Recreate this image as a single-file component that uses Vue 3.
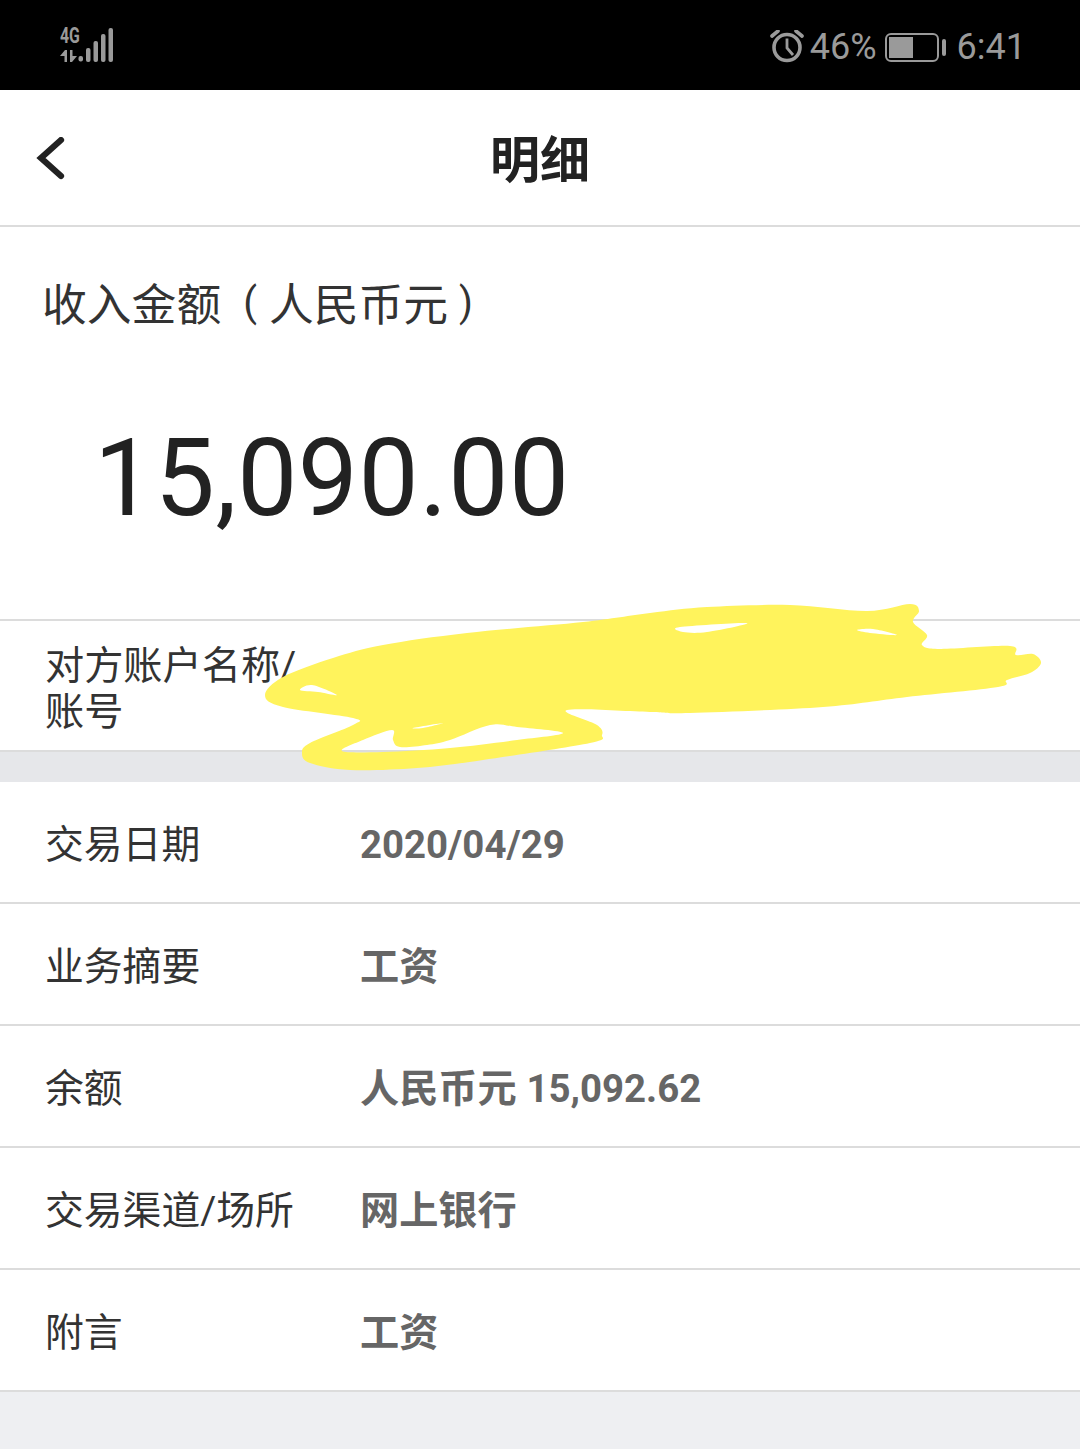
<script setup>
const rows = [
  { label: '交易日期', num: '2020/04/29' },
  { label: '业务摘要', value: '工资' },
  { label: '余额', value: '人民币元 ', num: '15,092.62' },
  { label: '交易渠道/场所', value: '网上银行' },
  { label: '附言', value: '工资' },
]

const outline = [
  [265,695],[283,677],[333,658],[383,645],[467,633],[583,622],[650,613],[707,607],[790,605],[867,611],[910,604],[919,611],[913,622],[927,635],[922,645],[940,649],[1010,646],[1016,655],[1033,654],[1041,663],[1030,673],[1007,680],[998,687],[907,697],[823,707],[690,713],[650,712],[567,710],[597,725],[602,735],[590,743],[483,760],[417,768],[350,770],[310,763],[302,753],[310,743],[353,725],[353,718],[283,707],
]
const holes = [
  [[300,690],[312,685],[337,695],[318,692]],
  [[342,751],[363,740],[392,730],[393,740],[400,747],[427,745],[450,740],[490,725],[517,727],[563,733],[517,740],[450,748],[383,752]],
  [[413,728],[443,723],[423,728]],
  [[680,627],[747,623],[707,632],[683,632]],
  [[857,630],[873,629],[897,635],[870,633]],
]
function smooth(p) {
  const n = p.length
  let d = `M${p[0][0]} ${p[0][1]}`
  for (let i = 0; i < n; i++) {
    const a = p[(i - 1 + n) % n], b = p[i], c = p[(i + 1) % n], e = p[(i + 2) % n]
    const c1 = [b[0] + (c[0] - a[0]) / 6, b[1] + (c[1] - a[1]) / 6]
    const c2 = [c[0] - (e[0] - b[0]) / 6, c[1] - (e[1] - b[1]) / 6]
    d += `C${c1[0].toFixed(1)} ${c1[1].toFixed(1)} ${c2[0].toFixed(1)} ${c2[1].toFixed(1)} ${c[0]} ${c[1]}`
  }
  return d + 'Z'
}
const scribble = [outline, ...holes].map(smooth).join('')
</script>

<template>
  <div class="page">
    <div class="status">
      <div class="signal">
        <span class="net">4G</span>
        <svg class="signal-svg" width="56" height="36" viewBox="60 27 56 36">
          <g fill="#9a9a9a">
            <path d="M60 56l5-6h2v12h-2.500v-6z" />
            <path d="M70 50h2.500v6H77l-5 6h-2z" />
            <rect x="78.500" y="56" width="4.500" height="5.500" rx="2" />
            <rect x="86" y="48" width="4.500" height="14" rx="2" />
            <rect x="93.500" y="41" width="4.500" height="21" rx="2" />
            <rect x="101" y="34" width="4.500" height="28" rx="2" />
            <rect x="108.500" y="28" width="4.500" height="34" rx="2" />
          </g>
        </svg>
      </div>
      <div class="status-right">
        <svg width="34" height="34" viewBox="771 30 34 34" fill="none" stroke="#9a9a9a" stroke-width="3.600">
          <circle cx="788" cy="47.500" r="13" />
          <path d="M788 38.500v9.500l6 7" stroke-width="2.800" />
          <path d="M773 36l6-5M803 36l-6-5" stroke-linecap="round" />
        </svg>
        <span class="st-text pct">46%</span>
        <div class="battery"><div class="battery-fill"></div></div>
        <div class="battery-tip"></div>
        <span class="st-text time">6:41</span>
      </div>
    </div>

    <header class="nav">
      <svg class="back" width="30" height="44" viewBox="0 0 30 44" fill="none">
        <path d="M25 3L5 21l20 18" stroke="#222" stroke-width="6.200" stroke-linecap="round" />
      </svg>
      <h1 class="title">明细</h1>
    </header>

    <section class="amount">
      <div class="amount-label">收入金额<span class="paren open">(</span>人民币元<span class="paren close">)</span></div>
      <div class="amount-value">15,090.00</div>
    </section>

    <div class="payee">
      <div class="payee-label">对方账户名称/账号</div>
    </div>

    <div class="gap"></div>

    <div v-for="r in rows" :key="r.label" class="row">
      <span class="row-label">{{ r.label }}</span>
      <span class="row-value">{{ r.value }}<span v-if="r.num" class="num">{{ r.num }}</span></span>
    </div>

    <svg class="scribble" width="1080" height="1449" viewBox="0 0 1080 1449">
      <path :d="scribble" fill="#fff35c" fill-rule="evenodd" />
    </svg>
  </div>
</template>

<style>
html, body { margin: 0; padding: 0; background: #eeeff2; }
</style>

<style scoped>
.page {
  position: relative;
  width: 1080px;
  height: 1449px;
  overflow: hidden;
  background: #eeeff2;
  font-family: Roboto, "Noto Sans CJK SC", sans-serif;
}
.status {
  height: 90px;
  background: #000;
  display: flex;
  align-items: center;
  justify-content: space-between;
  padding: 0 54px 0 60px;
  box-sizing: border-box;
}
.signal { position: relative; width: 56px; height: 36px; margin-top: -1px; }
.signal-svg { display: block; }
.net {
  position: absolute;
  left: 0;
  top: -2px;
  font-size: 22px;
  line-height: 22px;
  font-weight: 700;
  color: #9a9a9a;
  transform: scaleX(0.72);
  transform-origin: left;
}
.status-right { display: flex; align-items: center; padding-top: 4px; }
.st-text { font-size: 36px; line-height: 40px; color: #9a9a9a; }
.pct { margin-left: 6px; }
.battery {
  box-sizing: border-box;
  width: 54px;
  height: 29px;
  margin-left: 8px;
  border: 2px solid #9a9a9a;
  border-radius: 6px;
  padding: 2px;
}
.battery-fill { width: 24px; height: 100%; background: #9a9a9a; }
.battery-tip { width: 4px; height: 17px; margin-left: 3px; background: #9a9a9a; border-radius: 2px; }
.time { margin-left: 11px; }

.nav {
  position: relative;
  height: 137px;
  box-sizing: border-box;
  background: #fff;
  border-bottom: 2px solid #dcdcdc;
  display: flex;
  align-items: center;
  justify-content: center;
}
.back { position: absolute; left: 36px; top: 47px; }
.title {
  margin: 6px 0 0;
  font-size: 50px;
  line-height: 60px;
  font-weight: 700;
  color: #222;
}
.amount {
  height: 394px;
  box-sizing: border-box;
  background: #fff;
  border-bottom: 2px solid #dcdcdc;
  padding: 46px 0 0 42px;
}
.amount-label { font-size: 44.800px; line-height: 60px; color: #333; }
.paren { font-size: 40px; font-weight: 400; vertical-align: 5px; }
.open { margin: 0 12px 0 22px; }
.close { margin-left: 11px; }
.amount-value {
  margin: 83px 0 0 52px;
  font-size: 107px;
  line-height: 120px;
  color: #222;
  letter-spacing: 0.6px;
}
.payee {
  height: 131px;
  box-sizing: border-box;
  background: #fff;
  border-bottom: 2px solid #dcdcdc;
  padding: 22px 0 0 45px;
}
.payee-label {
  width: 260px;
  font-size: 39.200px;
  line-height: 46px;
  color: #333;
}
.gap { height: 30px; background: #e6e7ea; }
.row {
  height: 122px;
  box-sizing: border-box;
  background: #fff;
  border-bottom: 2px solid #dcdcdc;
  display: flex;
  align-items: center;
  padding-left: 45px;
  font-size: 38.800px;
}
.row-label { width: 315px; color: #333; line-height: 46px; margin-top: 6px; }
.row-value { color: #666; font-size: 39.200px; font-weight: 700; line-height: 46px; margin-top: 5px; }
.num { font-size: 38.400px; }
.scribble { position: absolute; left: 0; top: 0; pointer-events: none; }
</style>
